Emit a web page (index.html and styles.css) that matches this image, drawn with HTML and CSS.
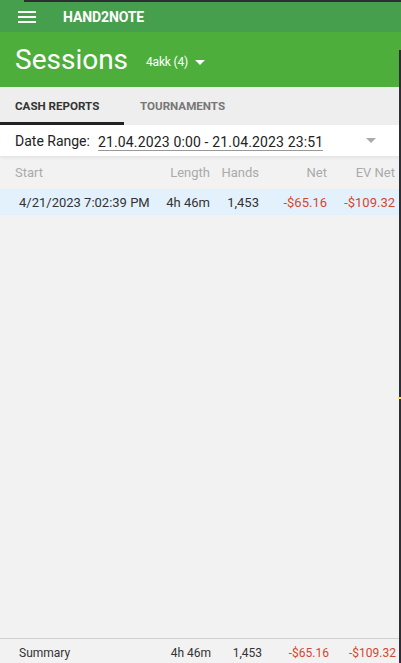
FILE: index.html
```html
<!DOCTYPE html>
<html lang="en">
<head>
    <meta charset="UTF-8">
    <meta name="viewport" content="width=device-width, initial-scale=1.0">
    <title>Sessions - Hand2Note</title>
    <link rel="stylesheet" href="styles.css">
</head>
<body>
    <div class="app">
        <div class="top-line">
            <span class="top-line-left"></span>
            <span class="top-line-right"></span>
        </div>
        <header class="app-bar">
            <button class="menu-button">
                <svg width="18" height="12" viewBox="0 0 18 12">
                    <rect x="0" y="0" width="18" height="2" fill="#fff"></rect>
                    <rect x="0" y="5" width="18" height="2" fill="#fff"></rect>
                    <rect x="0" y="10" width="18" height="2" fill="#fff"></rect>
                </svg>
            </button>
            <span class="app-title">HAND2NOTE</span>
        </header>

        <div class="page-header">
            <h1>Sessions</h1>
            <span class="player-select">4akk (4)
                <svg width="10" height="5" viewBox="0 0 10 5"><polygon points="0,0 10,0 5,5" fill="#fff"></polygon></svg>
            </span>
        </div>

        <nav class="tabs">
            <span class="tab active">CASH REPORTS</span>
            <span class="tab">TOURNAMENTS</span>
        </nav>

        <div class="date-range">
            <span class="date-label">Date Range:</span>
            <span class="date-value">21.04.2023 0:00 - 21.04.2023 23:51</span>
            <svg class="date-caret" width="10" height="5" viewBox="0 0 10 5"><polygon points="0,0 10,0 5,5" fill="#aaa"></polygon></svg>
        </div>

        <div class="table">
            <div class="row head">
                <span class="col-start">Start</span>
                <span>Length</span>
                <span>Hands</span>
                <span>Net</span>
                <span>EV Net</span>
            </div>
            <div class="row data selected">
                <span class="col-start">4/21/2023 7:02:39 PM</span>
                <span>4h 46m</span>
                <span>1,453</span>
                <span class="neg">-$65.16</span>
                <span class="neg">-$109.32</span>
            </div>
        </div>

        <div class="summary">
            <span class="col-start">Summary</span>
            <span>4h 46m</span>
            <span>1,453</span>
            <span class="neg">-$65.16</span>
            <span class="neg">-$109.32</span>
        </div>

        <div class="edge"><span class="edge-dot"></span></div>
    </div>
</body>
</html>
```

FILE: styles.css
```css
* {
    margin: 0;
    padding: 0;
    box-sizing: border-box;
}

body {
    font-family: Roboto, "Liberation Sans", sans-serif;
    background: #f2f2f2;
    width: 401px;
    height: 663px;
    overflow: hidden;
}

.app {
    position: relative;
    display: flex;
    flex-direction: column;
    height: 663px;
}

.top-line {
    display: flex;
    height: 2px;
}

.top-line-left {
    width: 24px;
    background: #459f4d;
}

.top-line-right {
    flex: 1;
    background: #2d2e33;
}

.app-bar {
    display: flex;
    align-items: center;
    height: 30px;
    background: #459f4d;
    padding-left: 18px;
}

.menu-button {
    background: none;
    border: none;
    display: flex;
    margin-right: 27px;
}

.app-title {
    color: #fff;
    font-weight: bold;
    font-size: 14px;
    letter-spacing: -0.1px;
}

.page-header {
    display: flex;
    align-items: center;
    height: 55px;
    background: #4dae3c;
    padding-left: 15px;
}

.page-header h1 {
    color: #fff;
    font-weight: normal;
    font-size: 28px;
    margin-right: 18px;
}

.player-select {
    display: flex;
    align-items: center;
    gap: 7px;
    color: #fff;
    font-size: 12px;
    margin-top: 5px;
    letter-spacing: -0.2px;
}

.tabs {
    display: flex;
    height: 38px;
    background: #eeeeee;
}

.tab {
    display: flex;
    align-items: center;
    width: 124px;
    padding-top: 2px;
    font-size: 11.6px;
    font-weight: bold;
    color: #777;
    border-bottom: 3px solid transparent;
}

.tab:first-child {
    padding-left: 15px;
}

.tab:last-child {
    width: auto;
    padding-left: 16px;
}

.tab.active {
    color: #333;
    border-bottom-color: #222;
}

.date-range {
    display: flex;
    align-items: center;
    height: 31px;
    background: #fff;
    padding-left: 15px;
    font-size: 14px;
    color: #222;
    box-shadow: 0 2px 3px rgba(0, 0, 0, 0.06);
    position: relative;
}

.date-label {
    margin-right: 8px;
}

.date-value {
    border-bottom: 1px solid #999;
    line-height: 16px;
    margin-top: 3px;
    letter-spacing: 0.15px;
}

.date-caret {
    margin-left: 43px;
}

.row,
.summary {
    display: grid;
    grid-template-columns: 140px 51px 49px 68px 68px;
    align-items: center;
    padding-right: 6px;
    font-size: 13px;
}

.row span,
.summary span {
    text-align: right;
    white-space: nowrap;
}

.row .col-start,
.summary .col-start {
    text-align: left;
}

.row.head {
    height: 33px;
    color: #aaa;
    padding-left: 15px;
    grid-template-columns: 144px 51px 49px 68px 68px;
}

.row.data {
    height: 26px;
    color: #333;
    padding-left: 19px;
}

.row.selected {
    background: #e3f1fc;
}

.neg {
    color: #d2472e;
}

.table {
    flex: 1;
}

.summary {
    height: 25px;
    padding-top: 3px;
    border-top: 1px solid #d0d0d0;
    color: #333;
    font-size: 12px;
    padding-left: 19px;
    padding-right: 5px;
    grid-template-columns: 140px 52px 51px 67px 67px;
}

.edge {
    position: absolute;
    right: 0;
    top: 50px;
    bottom: 0;
    width: 2px;
    background: #2d2e33;
}

.edge-dot {
    position: absolute;
    top: 347px;
    right: 0;
    width: 3px;
    height: 2px;
    background: #f5e63a;
}
```
